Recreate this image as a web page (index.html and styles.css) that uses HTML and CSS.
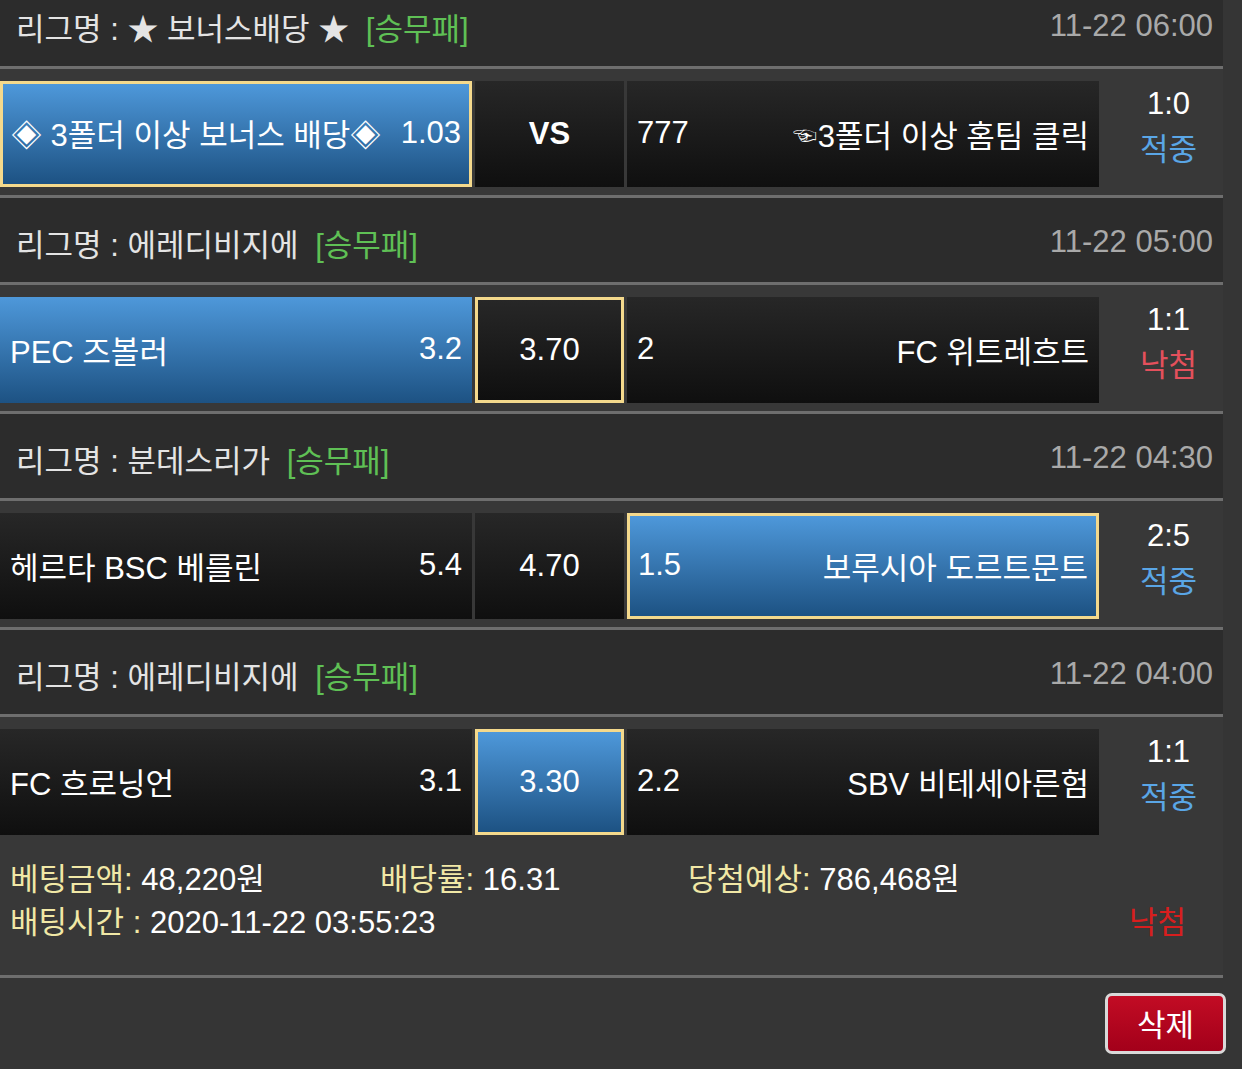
FILE: index.html
```html
<!DOCTYPE html>
<html lang="ko">
<head>
<meta charset="utf-8">
<title>배팅내역</title>
<link rel="stylesheet" href="styles.css">
</head>
<body>
<div class="page">
  <div class="bet">
    <div class="league first">
      <span class="league-name">리그명 : ★ 보너스배당 ★ <span class="tag">[승무패]</span></span>
      <span class="date">11-22 06:00</span>
    </div>
    <div class="match">
      <div class="cell team win picked"><span>◈ 3폴더 이상 보너스 배당◈</span><span>1.03</span></div>
      <div class="cell draw"><span class="vs">VS</span></div>
      <div class="cell team"><span>777</span><span><span class="hand">☜</span>3폴더 이상 홈팀 클릭</span></div>
      <div class="score"><span>1:0</span><span class="hit">적중</span></div>
    </div>

    <div class="league">
      <span class="league-name">리그명 : 에레디비지에 <span class="tag">[승무패]</span></span>
      <span class="date">11-22 05:00</span>
    </div>
    <div class="match">
      <div class="cell team win"><span>PEC 즈볼러</span><span>3.2</span></div>
      <div class="cell draw picked"><span>3.70</span></div>
      <div class="cell team"><span>2</span><span>FC 위트레흐트</span></div>
      <div class="score"><span>1:1</span><span class="miss">낙첨</span></div>
    </div>

    <div class="league">
      <span class="league-name">리그명 : 분데스리가 <span class="tag">[승무패]</span></span>
      <span class="date">11-22 04:30</span>
    </div>
    <div class="match">
      <div class="cell team"><span>헤르타 BSC 베를린</span><span>5.4</span></div>
      <div class="cell draw"><span>4.70</span></div>
      <div class="cell team win picked"><span>1.5</span><span>보루시아 도르트문트</span></div>
      <div class="score"><span>2:5</span><span class="hit">적중</span></div>
    </div>

    <div class="league">
      <span class="league-name">리그명 : 에레디비지에 <span class="tag">[승무패]</span></span>
      <span class="date">11-22 04:00</span>
    </div>
    <div class="match">
      <div class="cell team"><span>FC 흐로닝언</span><span>3.1</span></div>
      <div class="cell draw win picked"><span>3.30</span></div>
      <div class="cell team"><span>2.2</span><span>SBV 비테세아른험</span></div>
      <div class="score"><span>1:1</span><span class="hit">적중</span></div>
    </div>

    <div class="summary">
      <div class="summary-line totals">
        <span><span class="label">베팅금액:</span> 48,220원</span>
        <span><span class="label">배당률:</span> 16.31</span>
        <span><span class="label">당첨예상:</span> 786,468원</span>
      </div>
      <div class="summary-line">
        <span><span class="label">배팅시간 :</span> 2020-11-22 03:55:23</span>
        <span class="result-lost">낙첨</span>
      </div>
    </div>
  </div>
  <div class="footer">
    <button class="delete" type="button">삭제</button>
  </div>
</div>
</body>
</html>
```

FILE: styles.css
```css
html, body {
  margin: 0;
  padding: 0;
}

body {
  background: #353535;
  color: #ffffff;
  font-family: "Liberation Sans", "Noto Sans CJK KR", sans-serif;
  font-size: 31px;
  overflow: hidden;
}

.page {
  width: 1242px;
  margin-top: -18px;
}

.bet {
  width: 1223px;
  background: #383838;
}

.league {
  display: flex;
  align-items: center;
  justify-content: space-between;
  height: 87px;
  box-sizing: border-box;
  padding: 4px 10px 0 16px;
  background: #2c2c2c;
  color: #e4e4e4;
  border-top: 3px solid #6e6e6e;
}

.league.first {
  border-top: none;
  height: 84px;
}

.tag {
  color: #5fc055;
  margin-left: 8px;
}

.date {
  color: #a9a9a9;
}

.match {
  display: grid;
  grid-template-columns: 472px 149px 472px 1fr;
  column-gap: 3px;
  height: 104px;
  padding: 12px 0 10px;
  border-top: 3px solid #6e6e6e;
}

.cell {
  display: flex;
  align-items: center;
  justify-content: space-between;
  box-sizing: border-box;
  padding: 0 10px 2px 10px;
  background: linear-gradient(to bottom, #272727, #0f0f0f);
  white-space: nowrap;
}

.cell.draw {
  justify-content: center;
  padding-bottom: 0;
}

.cell.win {
  background: linear-gradient(to bottom, #4e98da, #1d5283);
}

.cell.picked {
  border: 3px solid #f4d98c;
  padding-left: 8px;
  padding-right: 8px;
}

.cell.draw.picked {
  padding: 0;
}

.vs {
  font-weight: bold;
  font-size: 31px;
}

.hand {
  font-size: 24px;
  vertical-align: 3px;
  margin-right: 1px;
}

.score {
  display: flex;
  flex-direction: column;
  align-items: center;
  justify-content: center;
  padding: 0 0 14px 12px;
  line-height: 46px;
}

.hit {
  color: #5aa6e6;
}

.miss {
  color: #e4505c;
}

.summary {
  padding: 15px 37px 31px 10px;
  line-height: 43px;
}

.summary-line {
  display: flex;
  justify-content: space-between;
}

.summary-line.totals {
  display: grid;
  justify-content: start;
  grid-template-columns: 370px 308px auto;
}

.label {
  color: #f1e8a6;
}

.result-lost {
  color: #d81e1e;
}

.footer {
  display: flex;
  justify-content: flex-end;
  padding: 15px 16px 20px 0;
  border-top: 3px solid #6e6e6e;
  width: 1223px;
  box-sizing: border-box;
}

.delete {
  width: 121px;
  height: 61px;
  margin-right: -19px;
  border: 3px solid #d9d9d9;
  border-radius: 7px;
  background: linear-gradient(to bottom, #c20c24, #a3001a);
  color: #ffffff;
  font-family: "Liberation Sans", "Noto Sans CJK KR", sans-serif;
  font-size: 31px;
  padding: 0 0 2px;
}
```
